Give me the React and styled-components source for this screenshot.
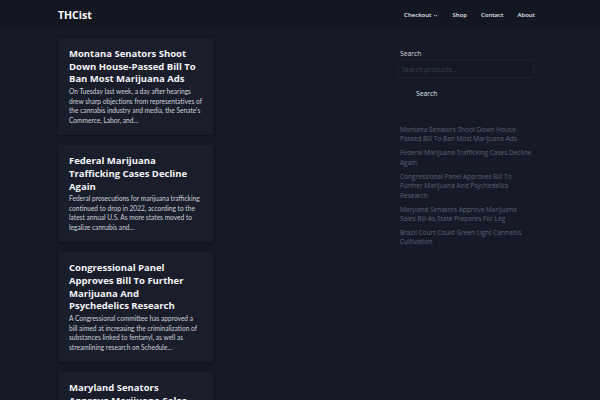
import React from "react";
import styled, { createGlobalStyle } from "styled-components";

const GlobalStyle = createGlobalStyle`
  html, body { margin: 0; padding: 0; background: #161a26; }
  body { font-family: "Open Sans", "Noto Sans", sans-serif; color: #d6d9e0; }
  * { box-sizing: border-box; }
`;

const Header = styled.header`
  height: 30px;
  background: #131722;
`;

const HeaderInner = styled.div`
  width: 484px;
  margin: 0 auto;
  height: 100%;
  display: flex;
  align-items: center;
  justify-content: space-between;
`;

const Logo = styled.a`
  font-family: "Open Sans", sans-serif;
  font-weight: 700;
  font-size: 10.5px;
  color: #ffffff;
  text-decoration: none;
  margin-top: -1px;
`;

const Nav = styled.nav`
  display: flex;
  align-items: center;
  gap: 14px;
  margin-right: 7px;
`;

const NavItem = styled.a`
  font-family: "Open Sans", sans-serif;
  font-weight: 600;
  font-size: 6px;
  color: #e2e4ea;
  text-decoration: none;
  display: flex;
  align-items: center;
  gap: 2px;
`;

const Page = styled.div`
  width: 484px;
  margin: 0 auto;
  padding-top: 8px;
  display: grid;
  grid-template-columns: 1fr 144px;
  gap: 16px;
`;

const Posts = styled.main`
  display: flex;
  flex-direction: column;
  gap: 10px;
`;

const Card = styled.article`
  width: 155px;
  background: #1a1e2b;
  padding: 10px 11px;
  box-shadow: 0 1px 4px rgba(0, 0, 0, 0.35);
`;

const Title = styled.h2`
  margin: 0 0 1px;
  padding-right: 4px;
  font-family: "Open Sans", sans-serif;
  font-weight: 700;
  font-size: 9.5px;
  line-height: 12.7px;
  color: #f4f5f7;
`;

const Excerpt = styled.p`
  margin: 0;
  font-family: "Lato", sans-serif;
  font-size: 6.6px;
  line-height: 9.5px;
  color: #cdd0d8;
`;

const Sidebar = styled.aside`
  padding-top: 12px;
`;

const Label = styled.label`
  display: block;
  font-size: 6.8px;
  color: #d3d6dd;
  margin-left: 2px;
  line-height: 8px;
`;

const Input = styled.input`
  display: block;
  width: 136px;
  height: 18px;
  margin-top: 2px;
  background: #141823;
  border: 1px solid #1c2130;
  color: #c9ccd4;
  font-family: "Open Sans", sans-serif;
  font-size: 6.5px;
  padding: 0 3px;
  outline: none;
  &::placeholder { color: #3b4152; }
`;

const Button = styled.button`
  margin-top: 7px;
  margin-left: 2px;
  background: #161a26;
  border: none;
  color: #dfe2e8;
  font-family: "Open Sans", sans-serif;
  font-size: 6.8px;
  padding: 4px 16px;
`;

const Links = styled.ul`
  list-style: none;
  width: 134px;
  margin: 23px 0 0;
  padding: 0 0 0 2px;
`;

const LinkItem = styled.li`
  margin-bottom: 4.6px;
  font-size: 6.5px;
  line-height: 9.4px;
  color: #5a6174;
`;

const Chevron = () => (
  <svg width="5" height="5" viewBox="0 0 10 10" fill="none" stroke="#e2e4ea" strokeWidth="1.6">
    <path d="M2 3.5 L5 6.5 L8 3.5" />
  </svg>
);

const posts = [
  {
    title: "Montana Senators Shoot Down House-Passed Bill To Ban Most Marijuana Ads",
    excerpt:
      "On Tuesday last week, a day after hearings drew sharp objections from representatives of the cannabis industry and media, the Senate’s Commerce, Labor, and…",
  },
  {
    title: "Federal Marijuana Trafficking Cases Decline Again",
    excerpt:
      "Federal prosecutions for marijuana trafficking continued to drop in 2022, according to the latest annual U.S. As more states moved to legalize cannabis and…",
  },
  {
    title: "Congressional Panel Approves Bill To Further Marijuana And Psychedelics Research",
    excerpt:
      "A Congressional committee has approved a bill aimed at increasing the criminalization of substances linked to fentanyl, as well as streamlining research on Schedule…",
  },
  {
    title: "Maryland Senators Approve Marijuana Sales Bill As State Prepares For Leg",
    excerpt:
      "Maryland senators approved a bill to set up the state’s marijuana sales program as regulators prepare for legalization.",
  },
];

const recent = [
  "Montana Senators Shoot Down House-Passed Bill To Ban Most Marijuana Ads",
  "Federal Marijuana Trafficking Cases Decline Again",
  "Congressional Panel Approves Bill To Further Marijuana And Psychedelics Research",
  "Maryland Senators Approve Marijuana Sales Bill As State Prepares For Leg",
  "Brazil Court Could Green Light Cannabis Cultivation",
];

export default function App() {
  return (
    <>
      <GlobalStyle />
      <Header>
        <HeaderInner>
          <Logo href="#">THCist</Logo>
          <Nav>
            <NavItem href="#">
              Checkout <Chevron />
            </NavItem>
            <NavItem href="#">Shop</NavItem>
            <NavItem href="#">Contact</NavItem>
            <NavItem href="#">About</NavItem>
          </Nav>
        </HeaderInner>
      </Header>
      <Page>
        <Posts>
          {posts.map((p) => (
            <Card key={p.title}>
              <Title>{p.title}</Title>
              <Excerpt>{p.excerpt}</Excerpt>
            </Card>
          ))}
        </Posts>
        <Sidebar>
          <Label htmlFor="s">Search</Label>
          <Input id="s" placeholder="Search products…" />
          <Button>Search</Button>
          <Links>
            {recent.map((r) => (
              <LinkItem key={r}>{r}</LinkItem>
            ))}
          </Links>
        </Sidebar>
      </Page>
    </>
  );
}
